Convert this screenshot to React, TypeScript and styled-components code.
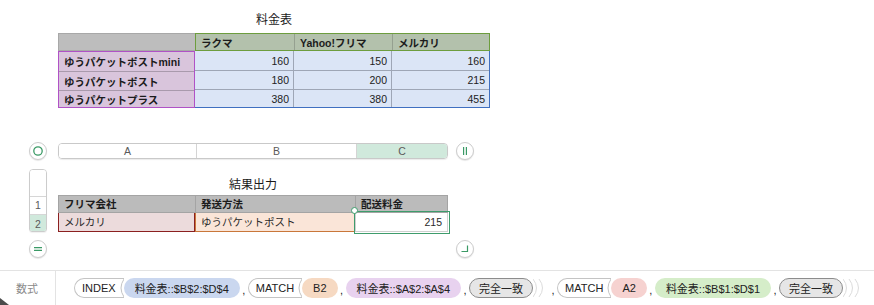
import React from "react";
import styled, { createGlobalStyle } from "styled-components";

const GlobalStyle = createGlobalStyle`
  html, body { margin: 0; padding: 0; background: #ffffff; }
  body {
    font-family: "Liberation Sans", "Noto Sans CJK JP", sans-serif;
    color: #1c1c1c;
  }
  * { box-sizing: border-box; }
`;

const Page = styled.div`
  width: 874px;
  height: 305px;
  position: relative;
  overflow: hidden;
  display: flex;
  flex-direction: column;
`;

/* ---------- top table ---------- */

const TopSection = styled.section`
  padding: 12px 0 0 58px;
  display: flex;
  flex-direction: column;
  align-items: flex-start;
`;

const Title = styled.div<{ $w: number }>`
  width: ${(p) => p.$w}px;
  text-align: center;
  font-size: 12px;
  line-height: 16px;
  color: #1a1a1a;
  margin-bottom: 5px;
`;

const PriceGrid = styled.div`
  display: grid;
  grid-template-columns: 137px 295px;
  grid-template-rows: 18px 57px;
  font-size: 10.5px;
  white-space: nowrap;
`;

const Corner = styled.div`
  background: #bdbdbd;
  border: 1px solid #a8a8a8;
  border-right: none;
`;

const HeadGroup = styled.div`
  display: grid;
  grid-template-columns: 98px 98px 1fr;
  background: #b3c1ac;
  border: 1px solid #6d9d3e;
`;

const HeadCell = styled.div`
  display: flex;
  align-items: center;
  padding-left: 5px;
  font-weight: bold;
  & + & { border-left: 1px solid #95a090; }
`;

const RowHeadGroup = styled.div`
  display: grid;
  grid-template-rows: 19px 19px 1fr;
  background: #d9c5dc;
  border: 1px solid #b052c6;
`;

const RowHeadCell = styled.div`
  display: flex;
  align-items: center;
  padding-left: 5px;
  font-weight: bold;
  & + & { border-top: 1px solid #a99aac; }
`;

const DataGroup = styled.div`
  display: grid;
  grid-template-columns: 98px 98px 1fr;
  grid-template-rows: 19px 19px 1fr;
  background: #dbe5f6;
  border-right: 1px solid #3f6fc0;
  border-bottom: 1px solid #3f6fc0;
`;

const DataCell = styled.div<{ $col: number; $row: number }>`
  display: flex;
  align-items: center;
  justify-content: flex-end;
  padding-right: 4px;
  color: #222;
  border-left: ${(p) => (p.$col > 0 ? "1px solid #9ea6b6" : "none")};
  border-top: ${(p) => (p.$row > 0 ? "1px solid #9ea6b6" : "none")};
`;

/* ---------- sheet ---------- */

const Sheet = styled.section`
  margin-top: 34px;
  padding-left: 29px;
  display: grid;
  grid-template-columns: 18px 11px 390px 8px 18px;
  grid-template-rows: 18px 63px 18px;
  row-gap: 8.5px;
`;

const RoundButton = styled.div<{ $col: number; $row: number }>`
  grid-column: ${(p) => p.$col};
  grid-row: ${(p) => p.$row};
  width: 18px;
  height: 18px;
  border-radius: 50%;
  border: 1px solid #cdcdcd;
  background: #fff;
  box-shadow: 0 1px 1px rgba(0, 0, 0, 0.1);
  display: flex;
  align-items: center;
  justify-content: center;
`;

const ColumnBar = styled.div`
  grid-column: 3;
  grid-row: 1;
  align-self: center;
  height: 16px;
  display: grid;
  grid-template-columns: 137px 160px 1fr;
  border: 1px solid #c9c9c9;
  border-radius: 4px;
  overflow: hidden;
  box-shadow: 0 1px 1px rgba(0, 0, 0, 0.08);
`;

const ColumnCell = styled.div<{ $active?: boolean }>`
  display: flex;
  align-items: center;
  justify-content: center;
  font-size: 10.5px;
  color: #5a5a5a;
  background: ${(p) => (p.$active ? "#d0e9dc" : "#fff")};
  & + & { border-left: 1px solid #d4d4d4; }
`;

const RowHeaders = styled.div`
  grid-column: 1;
  grid-row: 2;
  display: grid;
  grid-template-rows: 26px 18px 19px;
  border: 1px solid #cccccc;
  border-radius: 4px 4px 3px 3px;
  overflow: hidden;
  box-shadow: 0 1px 1px rgba(0, 0, 0, 0.06);
`;

const RowHeadNum = styled.div<{ $active?: boolean }>`
  display: flex;
  align-items: center;
  justify-content: center;
  font-size: 10.5px;
  color: #5a5a5a;
  background: ${(p) => (p.$active ? "#d0e9dc" : "#fff")};
  & + & { border-top: 1px solid #d6d6d6; }
`;

const ResultArea = styled.div`
  grid-column: 3;
  grid-row: 2;
  display: flex;
  flex-direction: column;
`;

const ResultTitle = styled.div`
  height: 26px;
  display: flex;
  align-items: center;
  justify-content: center;
  padding-top: 4px;
  font-size: 12px;
  color: #1a1a1a;
`;

const ResultGrid = styled.div`
  display: grid;
  grid-template-columns: 137px 160px 93px;
  grid-template-rows: 18px 19px;
  font-size: 10.5px;
  white-space: nowrap;
`;

const ResultHead = styled.div`
  display: flex;
  align-items: center;
  padding-left: 5px;
  font-weight: bold;
  background: #bbbbbb;
  border-top: 1px solid #a4a4a4;
  border-bottom: 1px solid #a4a4a4;
  border-left: 1px solid #a4a4a4;
  &:nth-child(3) { border-right: 1px solid #a4a4a4; }
`;

const ResultCell = styled.div<{ $bg: string; $border: string; $right?: boolean }>`
  position: relative;
  display: flex;
  align-items: center;
  justify-content: ${(p) => (p.$right ? "flex-end" : "flex-start")};
  padding: 0 5px;
  color: #2a2a2a;
  background: ${(p) => p.$bg};
  border: 1px solid ${(p) => p.$border};
  border-top: none;
`;

const Selection = styled.div`
  position: absolute;
  inset: -2px -3px -3px -2px;
  border: 1.5px solid #3e9c6c;
  pointer-events: none;
`;

const Handle = styled.div`
  position: absolute;
  left: -5px;
  top: -6px;
  width: 7px;
  height: 7px;
  border-radius: 50%;
  background: #fff;
  border: 1.5px solid #3e9c6c;
`;

/* ---------- formula bar ---------- */

const Spacer = styled.div`
  flex: 1;
`;

const FormulaBar = styled.footer`
  height: 35px;
  display: flex;
  border-top: 1px solid #e3e3e3;
`;

const FormulaLabel = styled.div`
  width: 56px;
  flex-shrink: 0;
  border-right: 1px solid #e3e3e3;
  display: flex;
  align-items: center;
  justify-content: center;
  padding-right: 1px;
  font-size: 11px;
  color: #8a8a8a;
`;

const Formula = styled.div`
  display: flex;
  align-items: center;
  padding-left: 18px;
  font-size: 11px;
  color: #222;
  white-space: nowrap;
  & > * { flex-shrink: 0; }
`;

const FnToken = styled.span`
  display: inline-flex;
  align-items: center;
  height: 20px;
  border: 1px solid #c4c4c4;
  border-right: none;
  border-radius: 10px 0 0 10px;
  padding-left: 7px;
  background: #fff;
`;

const ArgPill = styled.span<{ $bg: string }>`
  display: inline-flex;
  align-items: center;
  height: 20px;
  padding: 0 11px;
  border-radius: 10px;
  background: ${(p) => p.$bg};
`;

const ConstPill = styled.span`
  display: inline-flex;
  align-items: center;
  height: 20px;
  padding: 0 9px;
  border-radius: 10px;
  background: #e6e6e6;
  border: 1px solid #8c8c8c;
`;

const Comma = styled.span`
  display: inline-block;
  width: 8px;
  text-align: center;
  padding-top: 3px;
`;

const CornerMark = styled.svg`
  position: absolute;
  left: 0;
  bottom: 0;
`;

const green = "#3b9a66";

const OpenParen = () => (
  <svg width="6" height="18" viewBox="0 0 6 18" style={{ marginLeft: 2 }}>
    <path d="M6 0 Q0 9 6 18" fill="none" stroke="#c4c4c4" strokeWidth="1" />
  </svg>
);

const CloseParens = ({ n }: { n: number }) => (
  <svg width={4 + n * 6} height="20" viewBox={`0 0 ${4 + n * 6} 20`}>
    {Array.from({ length: n }).map((_, i) => (
      <path
        key={i}
        d={`M${i * 6} 1 Q${i * 6 + 7} 10 ${i * 6} 19`}
        fill="none"
        stroke="#dcdcdc"
        strokeWidth="1"
      />
    ))}
  </svg>
);

const priceHead = ["ラクマ", "Yahoo!フリマ", "メルカリ"];
const priceRows = ["ゆうパケットポストmini", "ゆうパケットポスト", "ゆうパケットプラス"];
const prices = [
  [160, 150, 160],
  [180, 200, 215],
  [380, 380, 455],
];

export default function App() {
  return (
    <Page>
      <GlobalStyle />
      <TopSection>
        <Title $w={432}>料金表</Title>
        <PriceGrid>
          <Corner />
          <HeadGroup>
            {priceHead.map((h) => (
              <HeadCell key={h}>{h}</HeadCell>
            ))}
          </HeadGroup>
          <RowHeadGroup>
            {priceRows.map((r) => (
              <RowHeadCell key={r}>{r}</RowHeadCell>
            ))}
          </RowHeadGroup>
          <DataGroup>
            {prices.map((row, ri) =>
              row.map((v, ci) => (
                <DataCell key={`${ri}-${ci}`} $row={ri} $col={ci}>
                  {v}
                </DataCell>
              ))
            )}
          </DataGroup>
        </PriceGrid>
      </TopSection>

      <Sheet>
        <RoundButton $col={1} $row={1}>
          <svg width="12" height="12" viewBox="0 0 12 12">
            <circle cx="6" cy="6" r="4.2" fill="none" stroke={green} strokeWidth="1.3" />
          </svg>
        </RoundButton>
        <ColumnBar>
          <ColumnCell>A</ColumnCell>
          <ColumnCell>B</ColumnCell>
          <ColumnCell $active>C</ColumnCell>
        </ColumnBar>
        <RoundButton $col={5} $row={1}>
          <svg width="12" height="12" viewBox="0 0 12 12">
            <path d="M4.6 2 V10 M7.4 2 V10" stroke={green} strokeWidth="1.2" />
          </svg>
        </RoundButton>

        <RowHeaders>
          <RowHeadNum />
          <RowHeadNum>1</RowHeadNum>
          <RowHeadNum $active>2</RowHeadNum>
        </RowHeaders>
        <ResultArea>
          <ResultTitle>結果出力</ResultTitle>
          <ResultGrid>
            <ResultHead>フリマ会社</ResultHead>
            <ResultHead>発送方法</ResultHead>
            <ResultHead>配送料金</ResultHead>
            <ResultCell $bg="#ecdbdc" $border="#8b2020">
              メルカリ
            </ResultCell>
            <ResultCell $bg="#fae5d8" $border="#c9773a">
              ゆうパケットポスト
            </ResultCell>
            <ResultCell $bg="#ffffff" $border="#d0d0d0" $right>
              215
              <Selection />
              <Handle />
            </ResultCell>
          </ResultGrid>
        </ResultArea>

        <RoundButton $col={1} $row={3}>
          <svg width="12" height="12" viewBox="0 0 12 12">
            <path d="M2 4.6 H10 M2 7.4 H10" stroke={green} strokeWidth="1.2" />
          </svg>
        </RoundButton>
        <RoundButton $col={5} $row={3}>
          <svg width="12" height="12" viewBox="0 0 12 12">
            <path d="M8.5 2.5 V8.5 H2.5" fill="none" stroke={green} strokeWidth="1.2" />
          </svg>
        </RoundButton>
      </Sheet>

      <Spacer />

      <FormulaBar>
        <FormulaLabel>数式</FormulaLabel>
        <Formula>
          <FnToken>
            INDEX
            <OpenParen />
          </FnToken>
          <ArgPill $bg="#cad7ef">料金表::$B$2:$D$4</ArgPill>
          <Comma>,</Comma>
          <FnToken>
            MATCH
            <OpenParen />
          </FnToken>
          <ArgPill $bg="#f6d9c2">B2</ArgPill>
          <Comma>,</Comma>
          <ArgPill $bg="#e8d2ef">料金表::$A$2:$A$4</ArgPill>
          <Comma>,</Comma>
          <ConstPill>完全一致</ConstPill>
          <CloseParens n={2} />
          <Comma>,</Comma>
          <FnToken>
            MATCH
            <OpenParen />
          </FnToken>
          <ArgPill $bg="#f6d2d0">A2</ArgPill>
          <Comma>,</Comma>
          <ArgPill $bg="#d5edc9">料金表::$B$1:$D$1</ArgPill>
          <Comma>,</Comma>
          <ConstPill>完全一致</ConstPill>
          <CloseParens n={3} />
        </Formula>
      </FormulaBar>

      <CornerMark width="10" height="8" viewBox="0 0 10 8">
        <path d="M0 1 L9 8 L0 8 Z" fill="#2c2c2c" opacity="0.85" />
      </CornerMark>
    </Page>
  );
}
